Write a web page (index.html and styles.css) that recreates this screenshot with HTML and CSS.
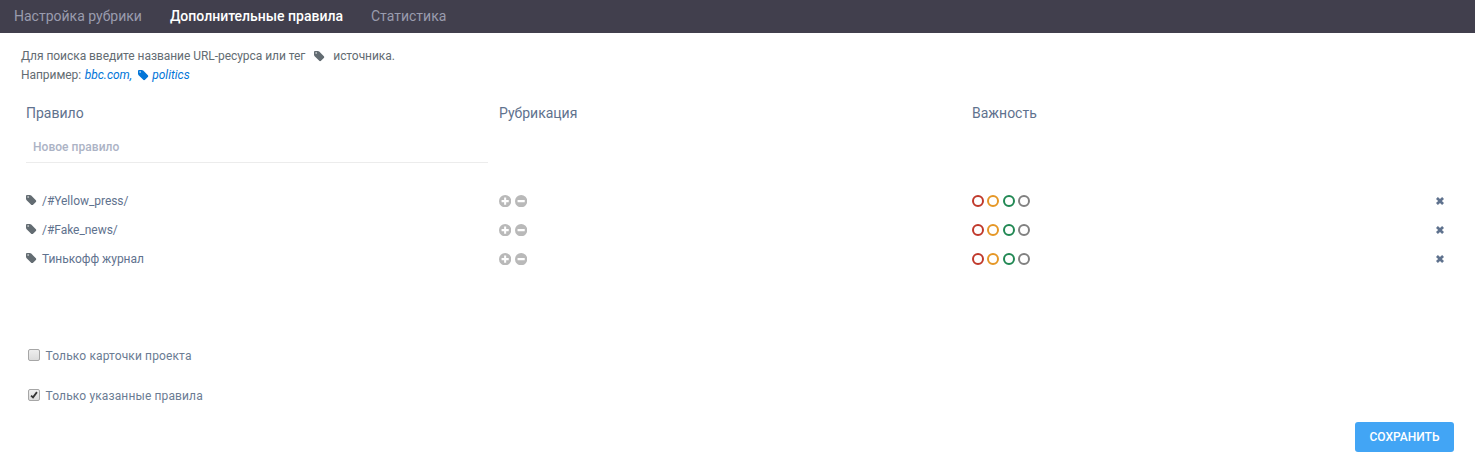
FILE: index.html
```html
<!DOCTYPE html>
<html lang="ru">
<head>
<meta charset="utf-8">
<title>Дополнительные правила</title>
<link rel="stylesheet" href="styles.css">
</head>
<body>
<svg class="defs" aria-hidden="true">
  <symbol id="tag" viewBox="0 0 1536 1536"><path d="M420 310a110 110 0 1 0-220 0a110 110 0 0 0 220 0zM1515 896c0 34-14 67-37 90l-491 492c-24 23-57 37-91 37s-67-14-90-37L91 762C40 712 0 614 0 543V128C0 58 58 0 128 0h416c71 0 169 40 220 91l714 714c23 24 37 57 37 91z"/></symbol>
  <symbol id="plus" viewBox="0 0 12 12"><path fill-rule="evenodd" d="M6 0a6 6 0 1 1 0 12A6 6 0 0 1 6 0zM5 2.5V5H2.5v2H5v2.5h2V7h2.5V5H7V2.5z"/></symbol>
  <symbol id="minus" viewBox="0 0 12 12"><path fill-rule="evenodd" d="M6 0a6 6 0 1 1 0 12A6 6 0 0 1 6 0zM2.5 5v2h7V5z"/></symbol>
  <symbol id="cross" viewBox="0 0 8 8"><path d="M1.9 0 4 2.1 6.1 0 8 1.9 5.9 4 8 6.1 6.1 8 4 5.9 1.9 8 0 6.1 2.1 4 0 1.9z"/></symbol>
</svg>
<nav class="tabs">
  <a class="tab">Настройка рубрики</a>
  <a class="tab tab-active">Дополнительные правила</a>
  <a class="tab">Статистика</a>
</nav>
<main class="content">
  <div class="hint">
    <div class="hint-line"><span>Для поиска введите название URL-ресурса или тег</span><svg class="tag hint-tag"><use href="#tag"/></svg><span>источника.</span></div>
    <div class="hint-line"><span class="example">Например:</span><em class="link">bbc.com,</em><svg class="tag link-tag"><use href="#tag"/></svg><em class="link">politics</em></div>
  </div>
  <div class="row head"><span>Правило</span><span>Рубрикация</span><span>Важность</span></div>
  <input class="new-rule" type="text" placeholder="Новое правило">
  <div class="rules">
    <div class="row rule">
      <div class="name"><svg class="tag"><use href="#tag"/></svg><span>/#Yellow_press/</span></div>
      <div class="signs"><svg><use href="#plus"/></svg><svg><use href="#minus"/></svg></div>
      <div class="levels"><i class="ring red"></i><i class="ring orange"></i><i class="ring green"></i><i class="ring gray"></i></div>
      <svg class="remove"><use href="#cross"/></svg>
    </div>
    <div class="row rule">
      <div class="name"><svg class="tag"><use href="#tag"/></svg><span>/#Fake_news/</span></div>
      <div class="signs"><svg><use href="#plus"/></svg><svg><use href="#minus"/></svg></div>
      <div class="levels"><i class="ring red"></i><i class="ring orange"></i><i class="ring green"></i><i class="ring gray"></i></div>
      <svg class="remove"><use href="#cross"/></svg>
    </div>
    <div class="row rule">
      <div class="name"><svg class="tag"><use href="#tag"/></svg><span>Тинькофф журнал</span></div>
      <div class="signs"><svg><use href="#plus"/></svg><svg><use href="#minus"/></svg></div>
      <div class="levels"><i class="ring red"></i><i class="ring orange"></i><i class="ring green"></i><i class="ring gray"></i></div>
      <svg class="remove"><use href="#cross"/></svg>
    </div>
  </div>
  <div class="options">
    <label class="option"><span class="box"></span><span>Только карточки проекта</span></label>
    <label class="option"><span class="box"><svg viewBox="0 0 9 9"><path d="M1.2 5.1 3.4 7.2 7.8 1.3"/></svg></span><span>Только указанные правила</span></label>
  </div>
  <button class="save">СОХРАНИТЬ</button>
</main>
</body>
</html>
```
FILE: styles.css
```css
* { box-sizing: border-box; }
body {
  margin: 0;
  height: 473px;
  overflow: hidden;
  background: #fff;
  color: #5f728e;
  font: 12px/20px Roboto, "Noto Sans", sans-serif;
}
.defs { display: none; }
svg { fill: currentColor; flex: none; }
.tabs {
  display: flex;
  gap: 28px;
  height: 33px;
  padding-left: 14px;
  background: #413f4d;
  color: #9a9cae;
  font-size: 14px;
  line-height: 32px;
}
.tab { white-space: nowrap; }
.tab-active { color: #fff; font-weight: 500; }
.content { display: flex; flex-direction: column; padding: 14px 21px 0; }
.hint { color: #636c72; line-height: 19px; letter-spacing: -0.05px; }
.hint-line { display: flex; align-items: center; height: 19px; white-space: nowrap; }
.tag { width: 10.5px; height: 10.5px; color: #636c72; }
.hint-tag { margin: 0 8.5px 0 9px; }
.example { margin-right: 3.5px; }
.link { color: #0275d8; letter-spacing: 0; }
.link-tag { margin: 0 3.5px 0 6px; color: #0275d8; }
.row {
  display: grid;
  grid-template-columns: 473px 473px 1fr 9px;
  margin-left: 5px;
  padding-right: 9px;
}
.head { margin-top: 18px; font-size: 14px; line-height: 20px; }
.new-rule {
  width: 462px;
  height: 32px;
  margin: 8px 0 0 5px;
  padding: 0 7px;
  border: 0;
  border-bottom: 1px solid #ececec;
  outline: 0;
  background: transparent;
  font: 500 12px Roboto, "Noto Sans", sans-serif;
  letter-spacing: 0.04px;
}
.new-rule::placeholder { color: #acb3c5; opacity: 1; }
.rules { margin-top: 23px; }
.rule { height: 29px; align-items: center; }
.name { display: flex; align-items: center; gap: 5.5px; letter-spacing: -0.04px; }
.name .tag { margin-top: -1px; }
.signs { display: flex; gap: 3.3px; padding-top: 1px; color: #b9b9b9; }
.signs svg { width: 12.3px; height: 12.3px; }
.levels { display: flex; gap: 3.4px; }
.ring { width: 12px; height: 12px; border: 2px solid; border-radius: 50%; }
.red { color: #c0392b; }
.orange { color: #e59726; }
.green { color: #218853; }
.gray { color: #808080; }
.remove { width: 8px; height: 8px; }
.options {
  display: flex;
  flex-direction: column;
  gap: 20px;
  margin: 73px 0 0 7px;
  color: #6b7c93;
  letter-spacing: 0.13px;
}
.option { display: flex; align-items: center; gap: 5.5px; height: 20px; }
.box {
  display: flex;
  width: 12px;
  height: 12px;
  margin-top: -2px;
  padding: 1px;
  border: 1px solid #a6a6a6;
  border-radius: 2px;
  background: linear-gradient(#eee, #dcdcdc);
}
.box svg { width: 8px; height: 8px; fill: none; stroke: #333; stroke-width: 2; }
.save {
  align-self: flex-end;
  width: 99px;
  height: 30px;
  margin-top: 16px;
  padding: 0;
  border: 0;
  border-radius: 3px;
  background: #42a5f5;
  color: #fff;
  font: 500 12px/30px Roboto, "Noto Sans", sans-serif;
}
```
